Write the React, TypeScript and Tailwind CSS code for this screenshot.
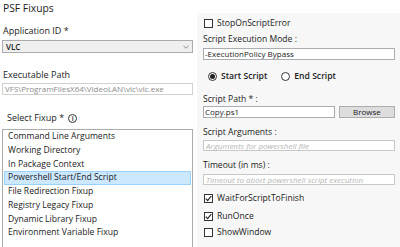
const fixups = [
  "Command Line Arguments",
  "Working Directory",
  "In Package Context",
  "Powershell Start/End Script",
  "File Redirection Fixup",
  "Registry Legacy Fixup",
  "Dynamic Library Fixup",
  "Environment Variable Fixup",
];

const Check = ({ checked, label }: { checked?: boolean; label: string }) => (
  <div className="flex items-center gap-[4px] h-[13px]">
    <div className="w-[9px] h-[9px] border border-[#333] bg-white flex items-center justify-center">
      {checked && (
        <svg width="7" height="7" viewBox="0 0 7 7">
          <path d="M0.8 3.6 L2.7 5.6 L6.3 1" stroke="#222" strokeWidth="1.2" fill="none" />
        </svg>
      )}
    </div>
    <span>{label}</span>
  </div>
);

const Radio = ({ checked, label }: { checked?: boolean; label: string }) => (
  <div className="flex items-center gap-[4px]">
    <div className="w-[9px] h-[9px] rounded-full border border-[#333] bg-white flex items-center justify-center">
      {checked && <div className="w-[5px] h-[5px] rounded-full bg-[#222]" />}
    </div>
    <span className="font-semibold">{label}</span>
  </div>
);

export default function App() {
  return (
    <div
      className="w-[400px] h-[247px] overflow-hidden bg-white flex text-[8.6px] text-[#1b1b1b]"
      style={{ fontFamily: '"Open Sans", sans-serif' }}
    >
      {/* left column */}
      <div className="w-[197px] flex flex-col pl-[2px] pr-[4px]">
        <div className="h-[16px] leading-[16px] text-[10.3px] pl-[1px]">PSF Fixups</div>
        <div className="mt-[8px] h-[14px] leading-[14px] text-[9px] pl-[1px]">Application ID *</div>
        <div className="mt-[2px] h-[13px] border border-[#acacac] bg-[#efefef] flex items-center justify-between px-[3px]">
          <span className="font-semibold text-[8px]">VLC</span>
          <svg width="6" height="4" viewBox="0 0 6 4">
            <path d="M0.5 0.8 L3 3.2 L5.5 0.8" stroke="#777" strokeWidth="0.8" fill="none" />
          </svg>
        </div>
        <div className="mt-[15px] h-[14px] leading-[14px] text-[9px] pl-[1px]">Executable Path</div>
        <div className="mt-[1px] h-[12px] border border-[#d0d0d0] flex items-center px-[2px] text-[8px] text-[#8c8c8c]">
          VFS\ProgramFilesX64\VideoLAN\vlc\vlc.exe
        </div>
        <div className="mt-[16px] h-[14px] flex items-center gap-[4px] pl-[5px] text-[9px]">
          <span>Select Fixup *</span>
          <div className="w-[9px] h-[9px] rounded-full border border-[#333] flex items-center justify-center text-[7px] leading-none font-semibold">
            i
          </div>
        </div>
        <div className="mt-[4px] flex-1 border border-[#acacac] border-b-0 px-[1px]">
          {fixups.map((f) => (
            <div
              key={f}
              className={
                f === "Powershell Start/End Script"
                  ? "h-[13.7px] flex items-center px-[3px] bg-[#cce8ff] border border-[#99d1ff]"
                  : "h-[13.7px] flex items-center px-[4px]"
              }
            >
              {f}
            </div>
          ))}
        </div>
      </div>

      {/* right column */}
      <div className="flex-1 mt-[13px] bg-[#f7f7f7] flex flex-col pl-[6px] pr-[5px]">
        <div className="mt-[4px] pl-[1px]">
          <Check label="StopOnScriptError" />
        </div>
        <div className="mt-[2px] h-[14px] leading-[14px]">Script Execution Mode :</div>
        <div className="mt-[2px] h-[12px] border border-[#abadb3] bg-white flex items-center px-[1px] text-[8px]">
          -ExecutionPolicy Bypass
        </div>
        <div className="mt-[10px] h-[13px] flex items-center gap-[14px] pl-[5px]">
          <Radio checked label="Start Script" />
          <Radio label="End Script" />
        </div>
        <div className="mt-[9px] h-[14px] leading-[14px]">Script Path * :</div>
        <div className="h-[12px] flex gap-[4px]">
          <div className="w-[132px] border border-[#abadb3] bg-white flex items-center px-[1px] text-[8px]">
            Copy.ps1
          </div>
          <div className="flex-1 border border-[#adadad] bg-[#dddddd] flex items-center justify-center text-[8px]">
            Browse
          </div>
        </div>
        <div className="mt-[7px] h-[14px] leading-[14px]">Script Arguments :</div>
        <div className="mt-[1px] h-[11px] border border-[#c8c8c8] bg-white flex items-center px-[2px] text-[8px] italic text-[#b4b4b4]">
          Arguments for powershell file
        </div>
        <div className="mt-[7px] h-[14px] leading-[14px]">Timeout (in ms) :</div>
        <div className="mt-[2px] h-[11px] border border-[#c8c8c8] bg-white flex items-center px-[2px] text-[8px] italic text-[#b4b4b4]">
          Timeout to abort powershell script execution
        </div>
        <div className="mt-[7px] pl-[1px]">
          <Check checked label="WaitForScriptToFinish" />
        </div>
        <div className="mt-[4.5px] pl-[1px]">
          <Check checked label="RunOnce" />
        </div>
        <div className="mt-[3.5px] pl-[1px]">
          <Check label="ShowWindow" />
        </div>
      </div>
    </div>
  );
}
